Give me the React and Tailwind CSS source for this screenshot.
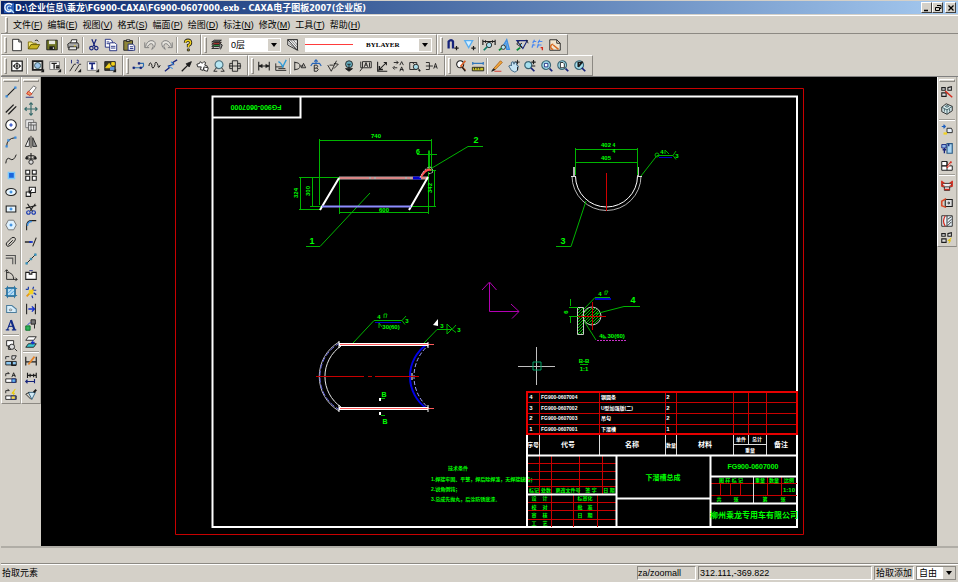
import clsx from "clsx"

const K = "#1c1c1c"
const N = "#16237a"
const B = "#3d8fe0"
const G = "#777777"
const Y = "#f2d21c"
const R = "#d42a1c"
const GR = "#0b8a3a"

// each stroke: [path, stroke, fill, width]
const ICONS = {
  new: [["M3 1.5h7l3 3v10H3z", K, "#fff"], ["M10 1.5v3h3", K]],
  open: [["M1.5 12.5v-8h4l1 1.5h4v2", "#7a6a00", "#f6ea7a"], ["M1.5 12.5l3-5h10l-3 5z", "#5c5200", "#c9b420"], ["M9 3q3-2 4 1", K]],
  save: [["M2 2.5h12v11H2z", K, "#6e7422"], ["M4.5 3h7v4h-7z", "none", "#e8e8e0"], ["M5 9.5h6v4H5z", "none", K], ["M9 10.5h1v2h-1z", "none", "#fff"]],
  print: [["M5 6l1.5-4h6l-1 4", K, "#fff"], ["M2 7l2-1.5h9.5l1 2v4h-12z", K, "#a8a8a8"], ["M4 10h8v3.5H3z", K, "#e8e8e8"], ["M9 9h2", Y]],
  cut: [["M5.5 1.5l3.5 8M10.5 1.5L7 9.5", N, "none", 1.4], ["M5 9.5a2 2 0 1 0 .1 4a2 2 0 1 0-.1-4M10.5 9.5a2 2 0 1 0 .1 4a2 2 0 1 0-.1-4", N, "none", 1.3]],
  copy: [["M1.500 1.500h6l2 2v7h-8z", N, "#fff"], ["M6.500 5.500h6l2 2v7h-8z", N, "#fff"], ["M3 4.500h3M3 6.500h3M8 9.500h5M8 11.500h5", N]],
  paste: [["M2 3h10v11H2z", K, "#8d8538"], ["M5 4V2h4v2z", K, "#ddd"], ["M7 7h5l2.5 2v5H7z", N, "#fff"], ["M9 10h4M9 12h4", N]],
  undo: [["M2 5v6h5", G], ["M3 10q1-6 6-7q5 0 5 4q0 4-4 6q3-4 1-6q-3-2-6 3", G, "#e6e4de"]],
  redo: [["M14 5v6H9", G], ["M13 10q-1-6-6-7q-5 0-5 4q0 4 4 6q-3-4-1-6q3-2 6 3", G, "#e6e4de"]],
  help: [["M5 5.5q0-3 3-3t3 3q0 2-2.5 3v2", K, "none", 3.6], ["M5 5.5q0-3 3-3t3 3q0 2-2.5 3v2", Y, "none", 1.8], ["M7.3 12.5h2.2v2.2H7.3z", K, Y]],
  layers: [["M2 12l3-2h8l-3 2z", K, "#eee"], ["M2 9.5l3-2h8l-3 2z", K, "#34a853"], ["M2 7l3-2h8l-3 2z", K, "#e0413a"], ["M2 4.5l3-2h8l-3 2z", K, "#777"], ["M11 6l3 2-2 5", K, "#999"]],
  hatchColor: [["M2 2h11v11M2 2v6l11 6", K, "#fff"], ["M2 2l12 12M7 4l6 7", K, "none", 0.8], ["M2 2h11v12z", K, "#f2f2f2"], ["M5 2l8 9M8 2l5 6M3 6l8 6", K, "none", 0.6]],
  snap: [["M3 12V4q3-3 5 0v8", N, "none", 2.6], ["M12 9v5M9.5 11.5h5", K, "none", 1.4]],
  filter: [["M2 3h9L6.5 11z", "#5aaef0", "#d6efff", 1.5], ["M12 9v5M9.5 11.5h5", K, "none", 1.4]],
  dimQuery: [["M1 2v6M15 2v6M1 4h14M4 2.5v3M12 2.5v3", K, "none", 1.3], ["M8 5a3 3 0 1 0 .1 6a3 3 0 1 0-.1-6", K, "#a9dcec"], ["M6 10l-4 4", "#0a7d6a", "none", 2]],
  styleText: [["M4 12L10 2l3 11h-3l-1-7", B, "#72b4f6", 1.5], ["M6 8a2.5 2.5 0 1 0 .1 5a2.5 2.5 0 1 0-.1-5", K, "#b8e8f0"], ["M4 12l-3 2", GR, "none", 1.8]],
  checkGeo: [["M2 3h12L9 12z", N, "none", 1.2], ["M5 3l-3 4 6 4M13 2l2 4", K], ["M8 6a2 2 0 1 0 .1 4", K, "#8cf"], ["M6 11l-4 3", GR, "none", 2]],
  rename: [["M2 4h4M8 4h5M1 8h4M7 8h5M4 2L2 6M10 2L8 6M3 7l-2 4M9 7l-2 4", "#4c8af0", "none", 1.4], ["M11 11h2v3", R, "none", 1.5]],
  sheet: [["M2 2h8l4 4v8H2z", K, "#f1e6cf"], ["M10 2v4h4", K], ["M6 7a3 3 0 1 0 .1 6M6 8l6 5", "#d86a20", "none", 1.7]],
  fitFrame: [["M2 2.5h12v11H2z", K, "#fff", 1.4], ["M8 4l2 2H6zM8 12l2-2H6zM3.5 8l2-2v4zM12.5 8l-2-2v4z", K, K, 0.6], ["M7.3 7.3h1.4v1.4H7.3z", K, K]],
  frame: [["M2 2.5h11v10H2z", K, "#e8e8e8", 2], ["M7.5 4a3.5 3.5 0 1 0 .1 7a3.5 3.5 0 1 0-.1-7", "#355", "#9cc4e8"], ["M15 11v4h-4z", "none", K]],
  titleFrame: [["M2 3h11v9H2z", G, "#f4f4f4"], ["M4 5h6M7 5v6M9 8h4M9 10h4", K, "none", 1.5], ["M15 11v4h-4z", "none", K]],
  seq: [["M2 14l5-8M8 14l5-8M7 6h2M13 6h2", K], ["M4 1v4M10 1.5q2-1 2 1l-2 2h2.5", N], ["M15 11v4h-4z", "none", K]],
  textT: [["M1.5 3h11v10h-11z", G, "#fff"], ["M3.5 5h7M7 5v6M5.5 11h3", N, "none", 1.8], ["M15 11v4h-4z", "none", K]],
  library: [["M2 3h12v10H2z", K, "#3a3a28"], ["M3 10l4-5 3 5zM10 4h3v3h-3z", Y, Y], ["M8 9h5v4H8z", "none", "#5e93d8"], ["M15 11v4h-4z", "none", K]],
  polylineA: [["M2 10h9q3-1 2-5H9", "#2a6cb0", "none", 1.3], ["M1 9h2v2H1zM9 9h2v2H9zM7 4h2v2H7z", N, N, 0.6]],
  wave: [["M1 8q1-5 2.5-3t1 4q1 3 2.5 0t1-4q1-3 2.500 0t1 4q1 2 2.500-2", K, "none", 1.1]],
  breakLine: [["M1 14l5-4-1-2 6-2-1-2 5-3", N, "none", 1.4], ["M5 8l5 3M8 3l3 4", B, "none", 1.2]],
  arrow: [["M2 14l7-7", K, "none", 1.5], ["M13 3l-6 2.5 3.5 3.5z", K, K]],
  gear: [["M5 3l2 2 2-2 2 1-1 3 3 1-1 3-3-1-1 3-3-1 1-3-4 0-1-3 3-1z", K, "#fff"], ["M9 9l5 1-1 4-4-1z", K, "#fff"]],
  magnify: [["M8 2a4.5 4.5 0 1 0 .1 9a4.5 4.5 0 1 0-.1-9", "#4c6f7c", "#b7e7f3", 1.3], ["M5 10l-3 4h4M11 10l3 4h-4", K]],
  section: [["M5 2h6v12H5z", K], ["M5 5H2v6h3M11 5h3v6h-3M1 8h14", K]],
  dim: [["M2 3v10M14 3v10M2 8h12", K, "none", 1.2], ["M2 8l4-2v4zM14 8l-4-2v4z", K, K, 0.5]],
  dimCoord: [["M2 5v8h12M2 9h9M5 11h8", K], ["M5 3q3 1 5 6l4-8", "#2f9bd8", "none", 1.5]],
  datum: [["M2 3v10M2 4q6 0 6 4t-6 4", K], ["M8 8h4M12 5l2.5 5h-5z", K]],
  textB: [["M2 8l2-3h8l2 3M8 5V1M6 3l2-2 2 2", "#2664b8", "none", 1.3], ["M6 7v7h3q3-2 0-4q2-2 0-3zM6 10.5h3", K]],
  rough: [["M2 7l4 7 6-12M4 7h5", K], ["M9 5l5 1-5 5", K]],
  target: [["M8 2a4 4 0 1 0 .1 8a4 4 0 1 0-.1-8", K, "#67aebf"], ["M8 6v5M4 11h8l-4 3zM6 6h4", K, K]],
  tolerance: [["M4 3h10v7H4zM1 14l3-4M2 3v7h2", K], ["M6 9l2-5 2 5M7 7h2M12 4v5", K]],
  slope: [["M3 3v11h11M4 13l9-9M10 4h3v3", K, "none", 1.2], ["M5 8v4h4", K, "none", 1.6]],
  alignMark: [["M2 4h5M5 2l2 2-2 2M2 10h4M3 8l-2 2 2 2M9 7l2-4 2 4M9 14l2-5 2 5M9 12h4", K]],
  detail: [["M2 4h8v8H2zM5 4l8 8", K], ["M9 6a3 3 0 1 0 .1 6a3 3 0 1 0-.1-6", K, "#a6d9e6"], ["M12 12l2 2", K, "none", 1.8]],
  branch: [["M1 4h4v8H1M1 8h8M10 11l2-6 2 6M10.500 9h3", K]],
  findText: [["M7 2a4 4 0 1 0 .1 8a4 4 0 1 0-.1-8", K, "#fff", 1.2], ["M13 2L8 8l5 5", "#d8602a", "none", 2], ["M9 9l4 5", K, "none", 1.5]],
  measure: [["M2 5h12M2 3.5v3M14 3.5v3", "#3377bb", "none", 1.5], ["M1.5 9.5h13v4h-13z", K, "#c8c02a"], ["M4 10v2M7 10v2M10 10v2", K]],
  pencil: [["M4 11l8-9 2 2-8 8z", "#a86018", "#f3a83a"], ["M4 11l-2 3 4-2", K, K], ["M5 14h8", R]],
  pan: [["M5 13L2 8l2-1 1 1V4l2-1 1 3 1-3 2 1v3l2 1-1 5-3 2z", "#355c7a", "#c6e4f4"], ["M12 1v5M9.5 3.5h5M12 9v4", K]],
  zoomPm: [["M6 3a4 4 0 1 0 .1 8a4 4 0 1 0-.1-8", "#3a6474", "#a5e0ee", 1.4], ["M9 10l4 4", N, "none", 2], ["M12 1v5M9.5 3.5h5M10 8h4", K, "none", 1.3]],
  zoomWin: [["M7 2a5 5 0 1 0 .1 10a5 5 0 1 0-.1-10", "#3a6474", "#a5e0ee", 1.3], ["M5 5h4v4H5z", N, "#fff"], ["M11 11l3 3", N, "none", 2]],
  zoomPage: [["M7 2a5 5 0 1 0 .1 10a5 5 0 1 0-.1-10", "#3a6474", "#a5e0ee", 1.3], ["M5 4h3l1.5 1.5V10H5z", K, "#fff"], ["M11 11l3 3", N, "none", 2]],
  zoomBack: [["M7 2a5 5 0 1 0 .1 10a5 5 0 1 0-.1-10", "#3a6474", "#a5e0ee", 1.3], ["M10 4H6v5M6 9l5-6", K, "none", 1.8], ["M10 10l4 4", N, "none", 2]],
  line: [["M3 13L13 3", K, "none", 1.2], ["M2 12h2v2H2zM12 2h2v2h-2z", B, B, 0.6]],
  parallel: [["M2 12l9-9M5 14l9-9", K, "none", 1.5]],
  circle: [["M8 2a6 6 0 1 0 .1 12a6 6 0 1 0-.1-12", K, "#fff", 1.2], ["M8 6v4M6 8h4", "#1a3fc0", "none", 1.3]],
  arc: [["M3 13Q3 4 13 3", K, "none", 1.1], ["M2 12h2v2H2zM4 5h2v2H4zM12 2h2v2h-2z", B, B, 0.6]],
  spline: [["M2 13q1-8 5-5t7-5", K, "none", 1.1]],
  point: [["M5 5h7v7H5z", "#7cc8fa", "#1a66dd", 1.6]],
  ellipse: [["M8 4a6 4 0 1 0 .1 8a6 4 0 1 0-.1-8", K, "#e8f6ff", 1.2], ["M7 7h2v2H7z", B, B]],
  rect: [["M2.5 4.5h11v7h-11z", K, "#e8f6ff", 1.2], ["M7 7h2v2H7z", B, B]],
  polygon: [["M5 2.500h6l3 5.500-3 5.500H5L2 8z", G, "#dff2ff", 1.1], ["M7 7h2v2H7z", B, B]],
  slot: [["M3 9l6-6q3-1 4 1q1 2-6 8q-3 2-4 0t0-3zM5 11l5-5", K, "none", 1.1]],
  offset: [["M2 4h11v10M2 7h8v7", "#555", "none", 1.3]],
  axes: [["M3 2v11h12M3 5q8 0 8 8M1 4l2-2 2 2M13 11l2 2-2 2", K]],
  hatch: [["M3 3h10v10H3z", "#1c5a86", "#b8def2"], ["M1 4h14M1 12h14M4 1v14M12 1v14", "#2878a8"], ["M5 9l4-4M7 11l4-4", B]],
  region: [["M3 4h6l5 4v4H3z", "#4d7d9c", "#d8eefa", 1.2], ["M6 9a1.5 1 0 1 0 3 0a1.5 1 0 1 0-3 0", G]],
  text: [["M2 13.5h4M9 13.5h5M4 13l4-10.500", "#102a86", "none", 1.3], ["M8 2.500l4 11", "#102a86", "none", 2.4], ["M5 9.500h5.500", "#102a86", "none", 1.3]],
  block: [["M3 3h8v6H3z", K, "#fff"], ["M9 7a3 3 0 1 0 .1 6a3 3 0 1 0-.1-6", K, "#ddd"], ["M5 9v4h3M12 12l3 3", K]],
  blockA: [["M2 6V3h4M9 2h5l-2 4h-3z", K, "#ddd"], ["M2 8.5h7v4H2zM9 8.5h5v4H9z", K, "#8cc8f2"], ["M9 9v4h5", K, "none", 1.5]],
  blockB: [["M2 6V3h4l-2-2M9 7l2-5 2 5M10 5h3", K], ["M2 9h12v4H2z", K, "#fff"], ["M9 9h4v4H9z", N, "#65bbee"]],
  blockC: [["M2 6V3h4l-2-2", K], ["M13 1L9 6h3l-2 3", "#e8c800", Y], ["M2 9h12v4H2z", K, "#fff"], ["M8 9h5v4H8z", N, "#f4d648"]],
  erase: [["M4 9l7-8 3 2-6 8z", "#666", "#fff"], ["M3 10l2-3 4 3-2 2z", R, "#ef9a60"], ["M2 14h9", N]],
  move: [["M8 1v14M1 8h14M6 3l2-2 2 2M6 13l2 2 2-2M3 6L1 8l2 2M13 6l2 2-2 2", "#35696a", "none", 1.3]],
  duplicate: [["M2 2h9v9H2z", G, "#eee"], ["M5 5h9v9H5z", "#555", "#ddd"], ["M5 8h9M8 5v9M11 8v6", "#555"]],
  mirror: [["M6 3v10H1.5z", K, "#fff"], ["M10 3v10h4.5z", K, "#999"], ["M8 1v14", K]],
  rotate: [["M2 8q0-4 6-4t6 4M8 1v9M2 8h12M5 6l-3 2M11 6l3 2", K, "none", 1.2], ["M8 9a2.5 2.5 0 1 0 .1 5a2.5 2.5 0 1 0-.1-5", K, "#ddd"]],
  array: [["M2 2.500h4.500V7H2zM9.500 2.500H14V7H9.500zM2 9.500h4.500V14H2zM9.500 9.500H14V14H9.500z", K, "#fff", 1.2]],
  scale: [["M6 2.5h7v6H6z", K, "#fff", 1.2], ["M2.5 8h5v5h-5zM9 5l-3 4M6 6v3h3", K, "#fff", 1.2]],
  trim: [["M4 2l6 9M13 2L7 10M2 7l12-3", K, "none", 1.2], ["M5 10a2 2 0 1 0 .1 4a2 2 0 1 0-.1-4M11 10a2 2 0 1 0 .1 4a2 2 0 1 0-.1-4", "#1c3cb0", "none", 1.4]],
  fillet: [["M3 14V9q0-6 6-6h5", K, "none", 1.2], ["M4 9q0-5 5-5", B, "none", 1.6]],
  extend: [["M1 8h7", K, "none", 1.6], ["M6 8h4", "#1230d0", "none", 2], ["M10 13l4-10", K, "none", 1.2]],
  breakAt: [["M3 13L13 3", K, "none", 1.1], ["M2 12h2v2H2zM7 7h2v2H7zM12 2h2v2h-2z", "#2b8a9c", B, 0.6]],
  stretch: [["M2 5h4v2h3V5h5v8H2z", K, "#fff", 1.2], ["M6 3h4", N]],
  explode: [["M3 13l8-8", "#e89a10", "none", 2], ["M2 5h3M5 2v3M11 9l3 2M9 12l1 3M11 2l-1 3M14 6h-3", "#2040a8", "none", 1.4], ["M6 6h4v4H6z", Y, Y]],
  distance: [["M3 2v12M13 2v12", K, "none", 1.2], ["M5 8h7M9 5l3 3-3 3", "#1430cc", "none", 1.6]],
  format: [["M8 2h5v5H8zM12 7v5", K, "#777"], ["M2 9h5v5H2z", "#066a24", "#2fb45a"], ["M7 5L4 8", "#1430cc"]],
  layerMove: [["M5 2h9l-3 4H2z", K, "#fff"], ["M5 10h9l-3 4H2z", K, "#38c6d0"], ["M10 6v4M8 8l2 2 2-2", "#1430cc", "none", 1.3]],
  dimEdit: [["M2 3v10M14 3v10M2 9h12", K, "none", 1.3], ["M5 12l7-9", "#e5842a", "none", 2]],
  dimStyle: [["M4 2v6M14 2v6M4 5h10M7 3v4M11 3v4", K, "none", 1.3], ["M2 12h10M4 10l-2 2 2 2M12 9v5", N, "none", 1.3]],
  brush: [["M5 5h8l-4 8z", "#2a5c7a", "#cfe8f4"], ["M14 2l-3 3", K, "none", 2.2], ["M2 7l6 6M2 7l4-2", K]],
  partsA: [["M2 3h4v3H2zM9 3l4-1v4H9zM2 9h5v4H2z", K, "#ddd", 1.2], ["M6 7l8 7", R, "none", 1.6]],
  cube: [["M2 6l5-4 7 3v5l-6 4-6-3z", K, "#d5e6e8"], ["M2 6l6 3 6-4M8 9v5M6 5l2-1 2 1-2 1zM5 8v3M11 8v3", "#3a5a60"]],
  partsB: [["M8 6h5l1 2v3H8z", K, "#e6f0fa"], ["M2 4h4M4 2l2 2-2 2", "#1d5fc0", "none", 1.4], ["M4 12h4", Y, "none", 2.5]],
  partsC: [["M8 3h6v11H8z", "#2c5b84", "#a8d4f2", 1.3], ["M2 4h5v4H2z", N, "#8cb4ea"], ["M3 10h4M5 8v6M10 3v3", N, "none", 1.5]],
  partsD: [["M2 4h6v5H2zM2 9h12v5H2zM8 4v10", K, "#fff", 1.1], ["M8 11l5-7", R, "none", 2], ["M9 10l3-4", "#eee", "none", 1]],
  partsE: [["M3 5h10v4H3zM5 9v4h6V9", K, "#eee"], ["M2 2v6h3M14 2v6h-3M2 3l3 2M14 3l-3 2M5 12h6", R, "none", 1.5]],
  partsF: [["M6 4h8v8H6z", K, "#ddd", 1.2], ["M9 8a1 1 0 1 0 2 0a1 1 0 1 0-2 0", K], ["M7 3L2 6v5l5 2", "#d84a2a", "none", 1.8]],
  partsG: [["M2 2h12v12H2zM8 2v12", K, "#e9f4fb"], ["M6 2q-4 6 0 12", R, "none", 1.4], ["M9 6l4-3M9 10l4-4M9 13l4-4", K]],
  partsH: [["M2 3h4v3H2zM9 3l4-1v4H9zM2 9h5v4H2z", K, "#ddd", 1.2], ["M13 8l-4 3h3l-2 3", "#e0c000", Y]],
}

const TOP_BARS = [
  { width: "w-[200px]", items: ["new", "open", "save", "|", "print", "|", "cut", "copy", "paste", "|", "undo", "redo", "|", "help"] },
  { width: "w-[236px]", props: true },
  { width: "w-[131px]", items: ["snap", "filter", "|", "dimQuery", "styleText", "checkGeo", "rename", "sheet"] },
]

const SECOND_BARS = [
  { width: "w-[122px]", items: ["fitFrame", "|", "frame", "titleFrame", "|", "seq", "textT", "library"] },
  { width: "w-[125px]", items: ["polylineA", "wave", "breakLine", "arrow", "gear", "magnify", "section"] },
  { width: "w-[197px]", items: ["dim", "dimCoord", "|", "datum", "textB", "rough", "target", "tolerance", "slope", "alignMark", "detail", "branch"] },
  { width: "w-[148px]", items: ["findText", "measure", "|", "pencil", "pan", "zoomPm", "zoomWin", "zoomPage", "zoomBack"] },
]

const DRAW_TOOLS = ["line", "parallel", "circle", "arc", "spline", "point", "ellipse", "rect", "polygon", "slot", "offset", "axes", "hatch", "region", "text", "|", "block", "blockA", "blockB", "blockC"]
const EDIT_TOOLS = ["erase", "move", "duplicate", "mirror", "rotate", "array", "scale", "trim", "fillet", "extend", "breakAt", "stretch", "explode", "distance", "format", "layerMove", "|", "dimEdit", "dimStyle", "brush"]
const PART_TOOLS = ["partsA", "cube", "|", "partsB", "partsC", "partsD", "|", "partsE", "partsF", "partsG", "partsH"]

const MENUS = [
  ["文件", "F"], ["编辑", "E"], ["视图", "V"], ["格式", "S"], ["幅面", "P"],
  ["绘图", "D"], ["标注", "N"], ["修改", "M"], ["工具", "T"], ["帮助", "H"],
]

const PARTS = [
  ["4", "FG900-0607004", "钢圆条", "2"],
  ["3", "FG900-0607002", "U型加强版(二)", "2"],
  ["2", "FG900-0607003", "吊勾", "2"],
  ["1", "FG900-0607001", "下溜槽", "1"],
]

const Icon = ({ name }) => (
  <svg viewBox="0 0 16 16" className="block w-3.5 h-3.5" aria-hidden="true">
    {ICONS[name].map(([d, stroke, fill = "none", width = 1], i) => (
      <path key={i} d={d} stroke={stroke} fill={fill} strokeWidth={width} />
    ))}
  </svg>
)

const ToolButton = ({ name }) => (
  <button type="button" aria-label={name} className="flex items-center justify-center w-4 h-4 shrink-0">
    <Icon name={name} />
  </button>
)

const Tools = ({ items, vertical }) =>
  items.map((item, i) =>
    item === "|" ? (
      <span
        key={i}
        className={clsx("shrink-0 bg-[#a09d96]", vertical ? "w-4 h-0.5 border-b border-white" : "w-0.5 h-4 border-r border-white")}
      />
    ) : (
      <ToolButton key={i} name={item} />
    ),
  )

const Grip = () => <span className="w-[3px] h-4 shrink-0 border border-white border-r-[#8c8983] border-b-[#8c8983]" />

const Bar = ({ width, children }) => (
  <div className={clsx("flex items-center h-[21px] pl-0.5 pr-1 border-t border-l border-white border-r border-b border-r-[#8c8983] border-b-[#8c8983]", width)}>
    <Grip />
    <div className="flex flex-1 items-center justify-between pl-0.5">{children}</div>
  </div>
)

const Arrow = () => (
  <span className="absolute right-px top-px bottom-px w-3 flex items-center justify-center bg-[#d4d0c8] pointer-events-none">
    <svg viewBox="0 0 6 4" className="w-1.5 h-1">
      <path d="M0 0h6L3 4z" fill="#000" />
    </svg>
  </span>
)

const PropertyBar = () => (
  <>
    <ToolButton name="layers" />
    <label className="relative w-[52px]">
      <select aria-label="图层" className="block w-full h-3.5 pl-0.5 bg-white appearance-none text-[9px] leading-3.5">
        <option>0层</option>
      </select>
      <Arrow />
    </label>
    <ToolButton name="hatchColor" />
    <label className="relative w-[127px]">
      <select aria-label="线型" className="block w-full h-3.5 pl-[61px] bg-white appearance-none text-[7px] font-bold leading-3.5 font-['Liberation_Serif',serif]">
        <option>BYLAYER</option>
      </select>
      <span className="absolute left-0 top-1.5 w-12 h-px bg-[#ff3b3b] pointer-events-none" />
      <Arrow />
    </label>
  </>
)

const SideBar = ({ items, height }) => (
  <div className={clsx("flex flex-col items-center w-5 pt-0.5 border-l border-r border-b border-l-white border-r-[#aaa79f] border-b-[#8c8983]", height)}>
    <span className="w-4 h-[3px] shrink-0 border border-white border-r-[#8c8983] border-b-[#8c8983]" />
    <div className="flex flex-1 flex-col items-center justify-between pt-0.5">
      <Tools items={items} vertical />
    </div>
  </div>
)

const L = ({ d, c = "#00b400", w = 1, f = "none", dash }) => (
  <path d={d} stroke={c} strokeWidth={w} fill={f} strokeDasharray={dash} />
)

const T = ({ x, y, s = 6, c = "#00ff00", a = "middle", rot, children }) => (
  <text
    x={x}
    y={y}
    fontSize={s}
    fill={c}
    textAnchor={a}
    dominantBaseline="central"
    fontWeight={700}
    transform={rot ? `rotate(${rot} ${x} ${y})` : undefined}
  >
    {children}
  </text>
)

const SideView = () => (
  <g>
    <L d="M319.5 140.5H431.5M319.5 139v66M431.5 139v32" />
    <L d="M299 177.5H339M299 209.5H321M310 206.5H322M300.5 177v32M312.5 177v30" />
    <L d="M339.5 178v36M428.5 172v42M339 212.5H429M434.5 170v37M411 206.5H436M431 170.5h5" />
    <L d="M417 154.5H437M429 150v20" />
    <L d="M429 151v18" w={2} />
    <L d="M483 146.5H468L432 168M306 246.5H320L370 193" />
    <L d="M339 178H428" c="#b4a8a8" w={3} />
    <L d="M340 178H428" c="#ff6464" dash="29 2 3 2" />
    <L d="M413 178h8" c="#0000cd" w={3} />
    <L d="M339 178L320 210M428 177L409 210" c="#ffffff" w={2} />
    <L d="M322 206.5H411" c="#8c8cff" w={2} />
    <L d="M421 177q5-9 10-7" c="#ff5050" w={2} />
    <L d="M420 178q4-10 10-11q4 2 2 6l-4 1" c="#d0d0d0" dash="2 1" />
    <T x={376} y={136}>740</T>
    <T x={418} y={151} s={7}>6</T>
    <T x={476} y={140} s={9}>2</T>
    <T x={312} y={241} s={9}>1</T>
    <T x={384} y={210}>600</T>
    <T x={296} y={193} rot={-90}>324</T>
    <T x={308} y={191} rot={-90}>300</T>
    <T x={430} y={188} rot={-90}>342</T>
  </g>
)

const EndView = () => (
  <g>
    <L d="M572 176A34 34 0 0 0 641 176" c="#b4b4b4" />
    <L d="M575.5 176A31 31 0 0 0 637.5 176" c="#ffffff" />
    <L d="M574 167v10M638 167v10" c="#b4b4b4" w={2} />
    <L d="M571 176.5h5M637 176.5h5" c="#dcdcdc" />
    <L d="M606.5 173V211" c="#d00000" />
    <L d="M575 149.5H638M575.5 148V175M637.5 148V175M575 162.5H638" />
    <L d="M641 176L657 155.5H673M676 151l-3 4.5 3 4M665 154v-4l4 4" />
    <L d="M659 157.5h13" c="#0000c8" />
    <circle cx="657" cy="155" r="2" stroke="#00b400" fill="none" />
    <L d="M586 201L571 246.500H556" />
    <T x={606} y={145}>402</T>
    <T x={614} y={145} s={5}>4</T>
    <T x={614} y={151} s={5}>4</T>
    <T x={606} y={158}>405</T>
    <T x={662} y={152}>4</T>
    <T x={677} y={156}>3</T>
    <T x={563} y={241} s={9}>3</T>
  </g>
)

const TopView = () => (
  <g>
    <L d="M339 342A40 40 0 0 0 339 411" c="#c8c8c8" />
    <L d="M340 343A38 38 0 0 0 340 410" c="#6464dc" dash="5 2" />
    <L d="M341 346A37 37 0 0 0 341 407" c="#e6e6e6" />
    <L d="M426 345A39 39 0 0 0 426 408" c="#0000e6" w={2} />
    <L d="M430 344A41 41 0 0 0 430 409" c="#a0a0ff" dash="4 2" />
    <L d="M339 344.5H428M339 408.5H428" c="#ffffff" w={3} />
    <L d="M340 344.5H434M340 408.5H434" c="#ff5a5a" />
    <L d="M339 341v7M339 405v7M428 342v6M428 405v7M412 373v7" c="#ffffff" />
    <L d="M316 376.5H364M368 376.5h4M375 376.5H419" c="#c80000" />
    <L d="M353 343L374 320.5H402M406 316l-4 4.5 3 4M384 318v-4h3l-1 4M379 328v-5l3 4" />
    <L d="M375 322.5h26M439 329.5h12" c="#0000c8" />
    <L d="M424 343L437 329.5H452M456 325l-4 4.5 4 3M447 324v10l5-5z" />
    <path d="M433 325l5-6v7z" fill="#fff" />
    <L d="M380 401v-3M380 415v-3" c="#ffffff" w={2} />
    <L d="M381 398.5h4M381 415.5h4" />
    <T x={379} y={317}>4</T>
    <T x={407} y={321}>3</T>
    <T x={391} y={327}>30(60)</T>
    <T x={442} y={326}>3</T>
    <T x={459} y={330}>3</T>
    <T x={384} y={394} s={7}>B</T>
    <T x={385} y={421} s={7}>B</T>
  </g>
)

const SectionView = () => (
  <g>
    <defs>
      <pattern id="hatching" width="3" height="3" patternUnits="userSpaceOnUse">
        <path d="M0 3L3 0" stroke="#00c800" strokeWidth="1" />
      </pattern>
    </defs>
    <path d="M577.5 307.5h6v27h-6z" fill="url(#hatching)" stroke="#c8c8c8" />
    <circle cx="592" cy="316" r="9" fill="url(#hatching)" stroke="#c8c8c8" />
    <L d="M592.5 302V330M578 316.5H606" c="#c80000" />
    <L d="M584 309L595 297.5H610M595 314L624 306.5H640M584 321L596 340M569 307.5h9M569 316.5h9M570.5 299v7M570.5 317v6" />
    <L d="M605 295v-4h3l-2 4" />
    <L d="M595 299h16" c="#0000c8" w={2} />
    <L d="M597 340.5h29" c="#c832c8" dash="2 1" />
    <T x={566} y={312} rot={-90}>6</T>
    <T x={600} y={294}>4</T>
    <T x={633} y={300} s={9}>4</T>
    <T x={612} y={336}>4⊾30(60)</T>
    <T x={584} y={361}>B-B</T>
    <T x={584} y={369}>1:1</T>
    <L d="M580 364.5h8" />
  </g>
)

const Notes = () => (
  <g>
    <T x={458} y={468} s={5}>技术条件</T>
    <T x={431} y={479} s={5} a="start">1.焊接牢固、平整，焊后除焊渣，无焊接缺陷；</T>
    <T x={431} y={489} s={5} a="start">2.锐角倒钝；</T>
    <T x={431} y={499} s={5} a="start">3.总成先抛丸，后涂防锈底漆。</T>
  </g>
)

const TitleBlock = () => (
  <g>
    <L d="M527 402.5H797M527 413.5H797M527 424.5H797M539.5 392V434M599.5 392V434M665.5 392V434M676.5 392V434M733.5 392V434M748.5 392V434M766.5 392V434" c="#c80000" />
    <L d="M527 463.5H616M527 471.5H616M527 479.5H616M527 486.5H616M539.5 455V494M551.5 455V527M579.5 455V494M602.5 455V494M527 502.5H616M527 510.5H616M527 519.5H616M573.5 494V527M597.5 494V527" c="#c80000" />
    <L d="M710 483.5H797M710 495.5H797M720.5 483V495M730.5 483V495M740.5 483V495M767.5 476V495M781.5 476V495" c="#c80000" />
    <L d="M539.5 434V455M599.5 434V455M665.5 434V455M676.5 434V455M733.5 434V455M766.5 434V455M733 444.5H766M748.5 434V444M753.5 476V503" c="#dcdcdc" />
    <L d="M527 434V527M527 455.5H797M616.5 455V527M710.5 455V527M616 498.5H710M527 494.5H616M710 476.5H797M710 503.5H797" c="#ffffff" w={2} />
    <path d="M527 392H797V434H527z" stroke="#e60000" strokeWidth="2" fill="none" />
    {PARTS.map(([no, code, name, count], i) => {
      const y = 397 + i * 10.5
      return (
        <g key={no}>
          <T x={531} y={y} c="#fff">{no}</T>
          <T x={541} y={y} s={5} c="#fff" a="start">{code}</T>
          <T x={601} y={y} s={5} c="#fff" a="start">{name}</T>
          <T x={668} y={y} c="#fff">{count}</T>
        </g>
      )
    })}
    <T x={533} y={445} s={6} c="#fff">序号</T>
    <T x={568} y={444} s={7} c="#fff">代号</T>
    <T x={632} y={444} s={7} c="#fff">名称</T>
    <T x={671} y={445} s={5} c="#fff">数量</T>
    <T x={705} y={444} s={7} c="#fff">材料</T>
    <T x={741} y={439} s={5} c="#fff">单件</T>
    <T x={757} y={439} s={5} c="#fff">总计</T>
    <T x={750} y={450} s={5} c="#fff">重量</T>
    <T x={781} y={444} s={7} c="#fff">备注</T>
    <T x={534} y={490} s={5}>标记</T>
    <T x={546} y={490} s={5}>处数</T>
    <T x={568} y={490} s={5}>更改文件号</T>
    <T x={591} y={490} s={5}>签 字</T>
    <T x={609} y={490} s={5}>日 期</T>
    <T x={534} y={498} s={5}>设</T>
    <T x={545} y={498} s={5}>计</T>
    <T x={534} y={507} s={5}>校</T>
    <T x={545} y={507} s={5}>对</T>
    <T x={534} y={515} s={5}>审</T>
    <T x={545} y={515} s={5}>核</T>
    <T x={534} y={523} s={5}>工</T>
    <T x={545} y={523} s={5}>艺</T>
    <T x={585} y={498} s={5}>标审化</T>
    <T x={580} y={507} s={5}>批</T>
    <T x={590} y={507} s={5}>准</T>
    <T x={580} y={515} s={5}>日</T>
    <T x={590} y={515} s={5}>期</T>
    <T x={663} y={477} s={7}>下溜槽总成</T>
    <T x={753} y={466} s={7}>FG900-0607000</T>
    <T x={731} y={480} s={5}>图 样 标 记</T>
    <T x={760} y={480} s={5}>重量</T>
    <T x={774} y={480} s={5}>数量</T>
    <T x={789} y={480} s={5}>比例</T>
    <T x={789} y={490} s={6}>1:10</T>
    <T x={719} y={499} s={5}>共</T>
    <T x={736} y={499} s={5}>张</T>
    <T x={765} y={499} s={5}>第</T>
    <T x={783} y={499} s={5}>张</T>
    <T x={754} y={515} s={8}>柳州乘龙专用车有限公司</T>
  </g>
)

const Drawing = () => (
  <svg viewBox="41 77 896 469" className="block w-full h-full font-['Liberation_Sans','Noto_Sans_CJK_SC',sans-serif]">
    <path d="M175.5 88.5H803.5V534.5H175.5z" stroke="#c80000" fill="none" />
    <path d="M212.5 96.5H797V527H212.5z" stroke="#fff" strokeWidth="2" fill="none" />
    <L d="M213 117.5H300.5V97" c="#ffffff" w={2} />
    <T x={256} y={107} s={7} rot={180}>FG900-0607000</T>
    <SideView />
    <EndView />
    <TopView />
    <SectionView />
    <L d="M489.5 283V311.5H519M482 290l7.5-8 7 8M511 304l8 7.5-7 7" c="#b400b4" />
    <L d="M536.5 347V385M518 366.5H555" c="#c0c0c0" />
    <L d="M533 362h8v8h-8z" c="#00a064" />
    <Notes />
    <TitleBlock />
  </svg>
)

const WindowButton = ({ label, children }) => (
  <button
    type="button"
    aria-label={label}
    className="flex items-center justify-center w-[11px] h-[11px] bg-[#d4d0c8] border border-white border-r-[#404040] border-b-[#404040]"
  >
    <svg viewBox="0 0 8 8" className="w-2 h-2" fill="none" stroke="#000">
      {children}
    </svg>
  </button>
)

const TitleBar = () => (
  <header className="flex items-center h-[13px] shrink-0 pl-0.5 pr-0.5 bg-gradient-to-r from-[#0a246a] to-[#a6caf0]">
    <svg viewBox="0 0 12 12" className="w-3 h-3 shrink-0" fill="none">
      <path d="M1 1h10v10H1z" fill="#2c5fb8" />
      <path d="M9 3A4 4 0 1 0 9 8" stroke="#fff" strokeWidth="1.4" />
      <path d="M8 5a2 2 0 1 0 0 2M8 8l3 3" stroke="#bfe4ff" strokeWidth="1.2" />
    </svg>
    <h1 className="flex-1 text-white font-bold text-[9px] leading-3 whitespace-nowrap font-['DejaVu_Sans_Condensed','Noto_Sans','Noto_Sans_CJK_SC',sans-serif]">
      D:\企业信息\乘龙\FG900-CAXA\FG900-0607000.exb - CAXA电子图板2007(企业版)
    </h1>
    <WindowButton label="最小化">
      <path d="M1 6.5h4" strokeWidth="1.5" />
    </WindowButton>
    <WindowButton label="还原">
      <path d="M3 1.5h4v3H5M1.5 3.5h4v3h-4z" />
    </WindowButton>
    <span className="w-0.5" />
    <WindowButton label="关闭">
      <path d="M1.5 1.5l5 5M6.5 1.5l-5 5" strokeWidth="1.3" />
    </WindowButton>
  </header>
)

const StatusBar = () => (
  <footer className="flex items-center h-4 shrink-0 gap-0.5 pr-0.5 text-[9px] leading-3 border-t border-white">
    <span className="flex-1 pl-px">拾取元素</span>
    <span className="w-[59px] h-3.5 border border-[#8c8983] border-r-white border-b-white">za/zoomall</span>
    <span className="w-[174px] h-3.5 pl-px border border-[#8c8983] border-r-white border-b-white">312.111,-369.822</span>
    <label htmlFor="snap-mode" className="w-10 h-3.5 pl-px whitespace-nowrap border border-[#8c8983] border-r-white border-b-white">拾取添加</label>
    <span className="relative w-10">
      <select id="snap-mode" className="block w-full h-3.5 pl-0.5 bg-white appearance-none border border-[#8c8983] text-[9px] leading-3">
        <option>自由</option>
      </select>
      <Arrow />
    </span>
  </footer>
)

const App = () => {
  return (
    <div className="flex flex-col h-screen pl-px pt-px pb-0.5 overflow-hidden bg-[#d4d0c8] text-black font-['Liberation_Sans','Noto_Sans_CJK_SC',sans-serif]">
      <TitleBar />
      <nav className="flex items-center h-[19px] shrink-0 mt-px pl-1 gap-[5px] border-t border-white border-b border-b-[#8c8983] text-[9px] leading-3">
        <Grip />
        {MENUS.map(([label, key]) => (
          <button key={key} type="button" className="whitespace-nowrap">
            {label}(<u>{key}</u>)
          </button>
        ))}
      </nav>
      <div className="flex shrink-0">
        {TOP_BARS.map((bar) => (
          <Bar key={bar.width} width={bar.width}>
            {bar.props ? <PropertyBar /> : <Tools items={bar.items} />}
          </Bar>
        ))}
      </div>
      <div className="flex shrink-0">
        {SECOND_BARS.map((bar) => (
          <Bar key={bar.width} width={bar.width}>
            <Tools items={bar.items} />
          </Bar>
        ))}
      </div>
      <div className="flex flex-1 min-h-0 border-t border-[#808080]">
        <SideBar items={DRAW_TOOLS} height="h-[327px]" />
        <SideBar items={EDIT_TOOLS} height="h-[327px]" />
        <main className="flex-1 min-w-0 bg-black">
          <Drawing />
        </main>
        <SideBar items={PART_TOOLS} height="h-[170px]" />
        <span className="w-px" />
      </div>
      <div className="h-[18px] shrink-0 border-t-2 border-t-[#b0ada6] border-b border-b-[#8c8983]" />
      <StatusBar />
    </div>
  )
}

export default App
